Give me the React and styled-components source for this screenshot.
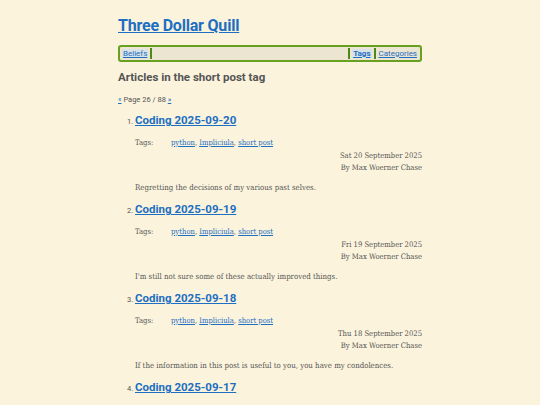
import React from 'react';
import styled, { createGlobalStyle } from 'styled-components';

const GlobalStyle = createGlobalStyle`
  html, body {
    margin: 0;
    padding: 0;
    background: #fbf3dc;
  }
  body {
    font-family: 'DejaVu Serif Condensed', 'DejaVu Serif', serif;
    color: #555;
  }
`;

const Page = styled.div`
  width: 304px;
  margin: 0 auto;
  padding-top: 16px;
`;

const SiteTitle = styled.h1`
  margin: 0 0 9px 0;
  font-family: 'Roboto', 'Liberation Sans', sans-serif;
  font-size: 16px;
  font-weight: 700;
  line-height: 20px;
  letter-spacing: -0.2px;

  a {
    color: #1c6fc2;
  }
`;

const Nav = styled.nav`
  display: flex;
  align-items: center;
  height: 11px;
  padding: 1px 2px;
  border: 2px solid #68a020;
  border-radius: 3px;
  background: #ece5d1;
  font-family: 'Roboto', 'Liberation Sans', sans-serif;
  font-size: 8px;
`;

const NavLink = styled.a`
  color: #1c6fc2;
  font-weight: ${(p) => (p.$bold ? 700 : 400)};
  background: ${(p) => (p.$active ? '#d9e2e6' : 'transparent')};
  padding: 0 1px;
`;

const Sep = styled.span`
  width: 2px;
  height: 11px;
  margin: 0 2px;
  background: #4c8a14;
`;

const Spacer = styled.span`
  flex: 1;
`;

const Heading = styled.h2`
  margin: 8px 0 11px 0;
  font-family: 'Roboto', 'Liberation Sans', sans-serif;
  font-size: 11.5px;
  font-weight: 700;
  color: #555;
`;

const Pager = styled.p`
  margin: 0 0 8px 0;
  font-family: 'Roboto', 'Liberation Sans', sans-serif;
  font-size: 7.5px;
  color: #555;

  a {
    color: #1c6fc2;
  }
`;

const List = styled.ol`
  margin: 0;
  padding-left: 17px;
`;

const Item = styled.li`
  margin-bottom: 7px;
  font-family: 'Roboto', 'Liberation Sans', sans-serif;
  font-size: 7.5px;

  &::marker {
    color: #555;
  }
`;

const PostTitle = styled.h3`
  margin: 0 0 9px 0;
  font-family: 'Roboto', 'Liberation Sans', sans-serif;
  font-size: 11.5px;
  font-weight: 700;
  line-height: 16px;

  a {
    color: #1c6fc2;
  }
`;

const Meta = styled.div`
  font-family: 'DejaVu Serif Condensed', 'DejaVu Serif', serif;
  font-size: 7.6px;
  line-height: 12px;
  color: #555;
`;

const TagRow = styled.div`
  display: flex;
  margin-bottom: 1px;

  span {
    width: 36px;
  }

  a {
    color: #1c6fc2;
  }
`;

const RightLine = styled.div`
  text-align: right;
`;

const Summary = styled.p`
  margin: 8px 0 0 0;
  font-family: 'DejaVu Serif Condensed', 'DejaVu Serif', serif;
  font-size: 7.8px;
  line-height: 12px;
  color: #555;
`;

const posts = [
  { n: '20', date: 'Sat 20 September 2025', text: 'Regretting the decisions of my various past selves.' },
  { n: '19', date: 'Fri 19 September 2025', text: "I'm still not sure some of these actually improved things." },
  { n: '18', date: 'Thu 18 September 2025', text: 'If the information in this post is useful to you, you have my condolences.' },
  { n: '17', date: 'Wed 17 September 2025', text: 'More of the same.' },
];

export default function App() {
  return (
    <>
      <GlobalStyle />
      <Page>
        <SiteTitle>
          <a href="#">Three Dollar Quill</a>
        </SiteTitle>
        <Nav>
          <NavLink href="#" $active>Beliefs</NavLink>
          <Sep />
          <Spacer />
          <Sep />
          <NavLink href="#" $bold $active>Tags</NavLink>
          <Sep />
          <NavLink href="#">Categories</NavLink>
        </Nav>
        <Heading>Articles in the short post tag</Heading>
        <Pager>
          <a href="#">«</a> Page 26 / 88 <a href="#">»</a>
        </Pager>
        <List>
          {posts.map((p) => (
            <Item key={p.n}>
              <PostTitle>
                <a href="#">Coding 2025-09-{p.n}</a>
              </PostTitle>
              <Meta>
                <TagRow>
                  <span>Tags:</span>
                  <div>
                    <a href="#">python</a>, <a href="#">Impliciula</a>, <a href="#">short post</a>
                  </div>
                </TagRow>
                <RightLine>{p.date}</RightLine>
                <RightLine>By Max Woerner Chase</RightLine>
              </Meta>
              <Summary>{p.text}</Summary>
            </Item>
          ))}
        </List>
      </Page>
    </>
  );
}
